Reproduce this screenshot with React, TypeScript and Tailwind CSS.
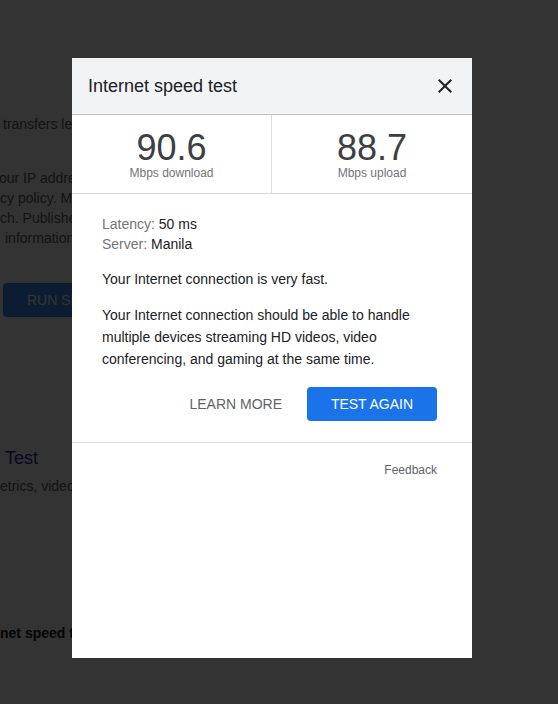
function Stat({ value, label, divider }: { value: string; label: string; divider?: boolean }) {
  return (
    <div
      className={
        "flex w-1/2 flex-col items-center pt-[15px] " +
        (divider ? "border-r border-[#dadce0]" : "")
      }
    >
      <div className="text-[36px] leading-none text-[#3c4043]">{value}</div>
      <div className="text-[12px] leading-[14px] text-[#70757a]">{label}</div>
    </div>
  );
}

function CloseIcon() {
  return (
    <svg width="24" height="24" viewBox="0 0 24 24" fill="#202124">
      <path d="M19 6.41 17.59 5 12 10.59 6.41 5 5 6.41 10.59 12 5 17.59 6.41 19 12 13.41 17.59 19 19 17.59 13.41 12z" />
    </svg>
  );
}

export default function App() {
  return (
    <div className="relative h-[704px] w-[558px] overflow-hidden bg-white font-['Liberation_Sans',Arial,sans-serif]">
      {/* page behind the dialog */}
      <div className="w-[400px] overflow-hidden whitespace-nowrap pt-[114px] text-[14px] leading-5 text-[#5f6368]">
        <p className="ml-[3px]">transfers less than 40 MB of data</p>
        <div className="mt-[34px] -ml-px">
          <p>our IP address will be shared with M-Lab</p>
          <p className="ml-px">cy policy. M-Lab conducts the test</p>
          <p className="ml-px">ch. Published data includes your IP</p>
          <p className="ml-[6px]">information about you as the user.</p>
        </div>
        <button className="ml-[3px] mt-[35px] flex h-[34px] items-center rounded bg-[#3d8bff] pl-6 pr-6 text-[14px] text-white">
          RUN SPEED TEST
        </button>
        <h2 className="ml-[5px] mt-[129px] text-[18px] leading-6 text-[#2a2ab0]">Test</h2>
        <p className="mt-[6px]">etrics, video quality and more</p>
        <p className="mt-[127px] font-bold text-[#202124]">net speed test</p>
      </div>

      {/* backdrop */}
      <div className="absolute inset-0 bg-black/80" />

      {/* dialog */}
      <div className="absolute left-[72px] top-[58px] flex h-[600px] w-[400px] flex-col bg-white">
        <div className="flex h-[57px] items-center justify-between border-b border-[#bdc1c6] bg-[#f1f3f4] pl-4 pr-[9px]">
          <h1 className="text-[18px] text-[#202124]">Internet speed test</h1>
          <button className="flex h-9 w-9 items-center justify-center">
            <CloseIcon />
          </button>
        </div>

        <div className="flex h-[79px] border-b border-[#dadce0]">
          <Stat value="90.6" label="Mbps download" divider />
          <Stat value="88.7" label="Mbps upload" />
        </div>

        <div className="border-b border-[#dadce0] pb-[21px] pl-[30px] pr-[35px] pt-5 text-[14px] text-[#202124]">
          <div className="leading-5">
            <p>
              <span className="text-[#70757a]">Latency:</span> 50 ms
            </p>
            <p>
              <span className="text-[#70757a]">Server:</span> Manila
            </p>
          </div>
          <p className="mt-[15px] leading-5">Your Internet connection is very fast.</p>
          <p className="mt-[15px] leading-[22px]">
            Your Internet connection should be able to handle multiple devices streaming HD videos, video
            conferencing, and gaming at the same time.
          </p>
          <div className="mt-[17px] flex justify-end gap-[9px]">
            <button className="h-[34px] px-4 text-[14px] text-[#5f6368]">LEARN MORE</button>
            <button className="h-[34px] w-[130px] rounded bg-[#1a73e8] text-[14px] text-white">
              TEST AGAIN
            </button>
          </div>
        </div>

        <div className="flex justify-end pr-[35px] pt-[19px]">
          <a className="text-[12px] leading-4 text-[#5f6368]">Feedback</a>
        </div>
      </div>
    </div>
  );
}
